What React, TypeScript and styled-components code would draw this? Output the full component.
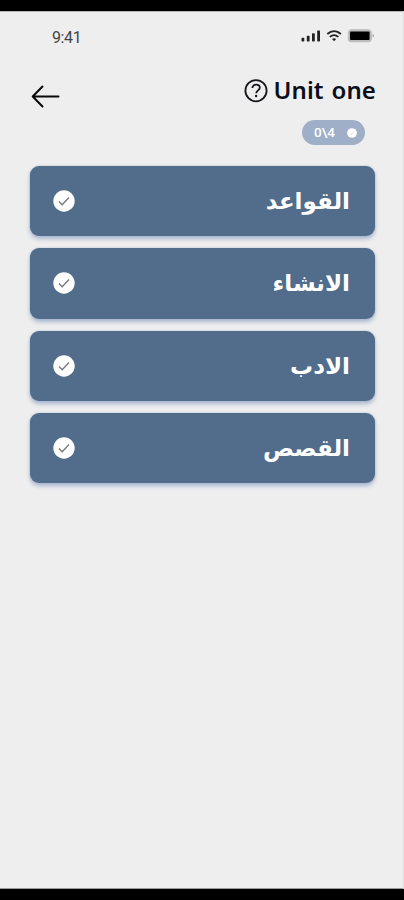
import React from "react";
import styled, { createGlobalStyle } from "styled-components";

const GlobalStyle = createGlobalStyle`
  *, *::before, *::after { box-sizing: border-box; }
  body { margin: 0; background: #000; }
`;

const Screen = styled.main`
  display: flex;
  flex-direction: column;
  width: 404px;
  height: 900px;
  border: solid #000;
  border-width: 11px 0;
  background: #eee;
  box-shadow: inset -1px 0 #dfdfdf, inset 0 1px #b5b5b5, inset 0 -1px #999;
  font-family: "Noto Sans", sans-serif;
`;

const StatusBar = styled.div`
  display: flex;
  justify-content: space-between;
  align-items: center;
  height: 50px;
  padding: 0 29px 0 52px;
`;

const Clock = styled.time`
  color: #444;
  font: 400 16px/20px Roboto, sans-serif;
  letter-spacing: -0.4px;
  padding-top: 3px;
`;

const StatusIcons = styled.svg`
  display: block;
  width: 74px;
  height: 16px;
`;

const Header = styled.header`
  display: flex;
  justify-content: space-between;
  height: 94px;
  padding: 13px 28px 0 31px;
`;

const BackButton = styled.button`
  display: block;
  width: 30px;
  height: 24px;
  margin-top: 10px;
  padding: 0;
  border: 0;
  background: none;
`;

const Heading = styled.div`
  display: flex;
  flex-direction: column;
  align-items: flex-end;
`;

const TitleRow = styled.div`
  display: flex;
  align-items: center;
  gap: 6px;
  height: 34px;
`;

const Title = styled.h1`
  margin: -3px 0 0;
  color: #0b0f1c;
  font-size: 24px;
  font-weight: 600;
  line-height: 34px;
  letter-spacing: 0.1px;
  word-spacing: 1.5px;
  white-space: nowrap;
`;

const Progress = styled.div`
  display: flex;
  align-items: center;
  justify-content: space-between;
  width: 63px;
  height: 25px;
  margin: 12px 11px 0 0;
  padding: 0 8px 0 12px;
  border-radius: 13px;
  background: #9eafc7;
  color: #fff;
  font: 500 13.5px/25px Roboto, sans-serif;
`;

const UnitList = styled.ul`
  display: flex;
  flex-direction: column;
  gap: 12px;
  margin: 0;
  padding: 11px 29px 0 30px;
  list-style: none;
`;

const UnitCard = styled.li`
  display: flex;
  align-items: center;
  justify-content: space-between;
  height: 70.3px;
  padding: 0 25px 0 23px;
  border-radius: 9px;
  background: #526c8b;
  box-shadow: 0 3px 4px #a9b6d0, 0 0 2px #adbccc;
`;

const UnitName = styled.span`
  color: #fff;
  font-family: "DejaVu Sans", sans-serif;
  font-size: 23px;
  font-weight: 700;
  line-height: 36px;
  white-space: nowrap;
`;

const Icon = styled.svg<{ $size: number }>`
  display: block;
  flex: none;
  width: ${(p) => p.$size}px;
  height: ${(p) => p.$size}px;
`;

const CheckBadge = ({ size, stroke }: { size: number; stroke: string }) => (
  <Icon $size={size} viewBox="0 0 22 22" fill="none">
    <circle cx="11" cy="11" r="10.7" fill="#fff" />
    <path d="M6 11.5l3.2 3.3L16 7.5" stroke={stroke} strokeWidth="1.3" />
  </Icon>
);

const units = ["القواعد", "الانشاء", "الادب", "القصص"];

export default function App() {
  return (
    <>
      <GlobalStyle />
      <Screen>
        <StatusBar>
          <Clock>9:41</Clock>
          <StatusIcons viewBox="0 0 74 16">
            <g fill="#222">
              <rect x="0.5" y="9.8" width="2.8" height="3.7" rx=".7" />
              <rect x="5.8" y="7.8" width="2.8" height="5.7" rx=".7" />
              <rect x="11" y="5.2" width="2.8" height="8.3" rx=".7" />
              <rect x="16.2" y="2.5" width="2.8" height="11" rx=".7" />
            </g>
            <g fill="none" stroke="#222" strokeWidth="1.8">
              <path d="M26.3 6c4.2-3.7 9.4-3.7 13.6 0" />
              <path d="M28.8 8.9c2.7-2.3 5.9-2.3 8.6 0" />
            </g>
            <path d="M31 11c1.4-1 2.8-1 4.2 0l-2.1 2.3z" fill="#222" />
            <rect x="47.3" y="1.8" width="23" height="12" rx="2.8" fill="#bbb" stroke="#bbb" />
            <rect x="49" y="3.5" width="19.6" height="8.6" rx="1" fill="#000" />
            <path d="M71.5 5.8c2 .8 2 3.2 0 4z" fill="#aaa" />
          </StatusIcons>
        </StatusBar>
        <Header>
          <BackButton aria-label="Back">
            <svg width="30" height="24" viewBox="0 0 30 24" fill="none" stroke="#080808" strokeWidth="2" strokeLinecap="round" strokeLinejoin="round">
              <path d="M27.5 12.5H2M11.5 2.5L1.7 12.5l9.8 10" />
            </svg>
          </BackButton>
          <Heading>
            <TitleRow>
              <Icon $size={24} viewBox="0 0 24 24" fill="none" stroke="#15171c" strokeWidth="1.8">
                <circle cx="12" cy="11.7" r="10.6" />
                <path d="M8.4 9.1c0-2.1 1.5-3.5 3.7-3.5s3.7 1.3 3.7 3.2c0 2.5-3.6 2.7-3.6 5.5" />
                <circle cx="12.1" cy="17" r="1.2" fill="#15171c" stroke="none" />
              </Icon>
              <Title>Unit one</Title>
            </TitleRow>
            <Progress>
              <span>0\4</span>
              <CheckBadge size={10} stroke="#c5cfdd" />
            </Progress>
          </Heading>
        </Header>
        <UnitList>
          {units.map((name) => (
            <UnitCard key={name}>
              <CheckBadge size={22} stroke="#777" />
              <UnitName dir="rtl" lang="ar">{name}</UnitName>
            </UnitCard>
          ))}
        </UnitList>
      </Screen>
    </>
  );
}
